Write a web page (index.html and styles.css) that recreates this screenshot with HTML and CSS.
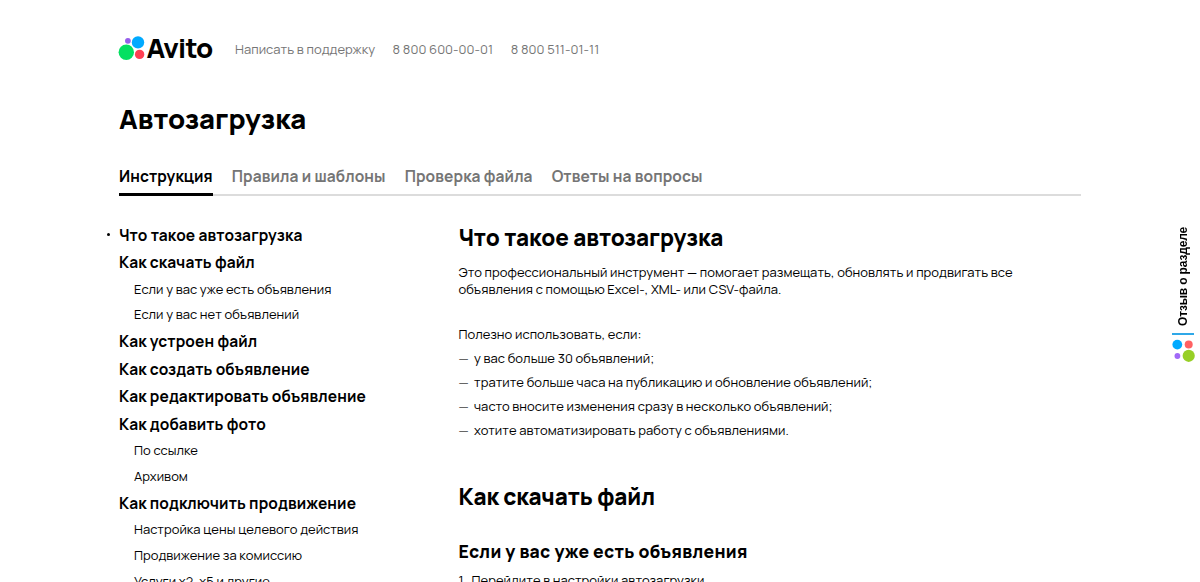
FILE: index.html
```
<!DOCTYPE html>
<html lang="ru">
<head>
    <meta charset="UTF-8">
    <meta name="viewport" content="width=device-width, initial-scale=1.0">
    <title>Автозагрузка</title>
    <link rel="stylesheet" href="styles.css">
</head>
<body>
    <div class="container">
        <header class="header">
            <a href="#" class="logo">
                <svg class="logo-icon" width="26" height="25" viewBox="0 0 26 25">
                    <circle cx="7.3" cy="16.2" r="7.7" fill="#04e061"/>
                    <circle cx="19" cy="6.4" r="6.2" fill="#00aaff"/>
                    <circle cx="8.9" cy="4.8" r="2.9" fill="#965eeb"/>
                    <circle cx="20.6" cy="18.4" r="4.7" fill="#ff4053"/>
                </svg>
                <span class="logo-text">Avito</span>
            </a>
            <nav class="contacts">
                <a href="#">Написать в поддержку</a>
                <a href="#">8 800 600-00-01</a>
                <a href="#">8 800 511-01-11</a>
            </nav>
        </header>

        <h1>Автозагрузка</h1>

        <nav class="tabs">
            <a href="#" class="active">Инструкция</a>
            <a href="#">Правила и шаблоны</a>
            <a href="#">Проверка файла</a>
            <a href="#">Ответы на вопросы</a>
        </nav>

        <div class="columns">
            <ul class="menu">
                <li class="current"><a href="#">Что такое автозагрузка</a></li>
                <li><a href="#">Как скачать файл</a></li>
                <li class="sub"><a href="#">Если у вас уже есть объявления</a></li>
                <li class="sub"><a href="#">Если у вас нет объявлений</a></li>
                <li><a href="#">Как устроен файл</a></li>
                <li><a href="#">Как создать объявление</a></li>
                <li><a href="#">Как редактировать объявление</a></li>
                <li><a href="#">Как добавить фото</a></li>
                <li class="sub"><a href="#">По ссылке</a></li>
                <li class="sub"><a href="#">Архивом</a></li>
                <li><a href="#">Как подключить продвижение</a></li>
                <li class="sub"><a href="#">Настройка цены целевого действия</a></li>
                <li class="sub"><a href="#">Продвижение за комиссию</a></li>
                <li class="sub"><a href="#">Услуги x2, x5 и другие</a></li>
            </ul>

            <main class="content">
                <h2>Что такое автозагрузка</h2>
                <p>Это профессиональный инструмент — помогает размещать, обновлять и продвигать все<br>объявления с помощью Excel-, XML- или CSV-файла.</p>
                <p class="list-title">Полезно использовать, если:</p>
                <ul class="dash-list">
                    <li>у вас больше 30 объявлений;</li>
                    <li>тратите больше часа на публикацию и обновление объявлений;</li>
                    <li>часто вносите изменения сразу в несколько объявлений;</li>
                    <li>хотите автоматизировать работу с объявлениями.</li>
                </ul>
                <h2 class="next">Как скачать файл</h2>
                <h3>Если у вас уже есть объявления</h3>
                <div class="step"><span>1.</span> <span>Перейдите в настройки автозагрузки.</span></div>
            </main>
        </div>
    </div>

    <a href="#" class="feedback">
        <span class="feedback-text">Отзыв о разделе</span>
        <svg class="feedback-icon" width="22" height="24" viewBox="1 0 22 24">
            <circle cx="6.3" cy="6.6" r="4.9" fill="#00aaff"/>
            <circle cx="17.7" cy="6.6" r="4" fill="#ff6163"/>
            <circle cx="6.4" cy="18" r="2.9" fill="#a169f7"/>
            <circle cx="17.7" cy="17.8" r="6.1" fill="#97cf26"/>
        </svg>
    </a>
</body>
</html>
```

FILE: styles.css
```
body {
    font-family: Manrope, Inter, "Open Sans", sans-serif;
    margin: 0;
    height: 582px;
    overflow: hidden;
    background: #fff;
    color: #000;
    font-size: 13px;
    line-height: 17px;
    letter-spacing: 0.05px;
}
a {
    color: inherit;
    text-decoration: none;
}
ul {
    list-style: none;
    margin: 0;
    padding: 0;
}
.container {
    width: 962px;
    margin: 0 auto;
    padding-top: 32px;
}
.header {
    display: flex;
    align-items: center;
    height: 32px;
}
.logo {
    display: flex;
    align-items: center;
    width: 116px;
}
.logo-icon {
    overflow: visible;
}
.logo-text {
    font-size: 27.5px;
    line-height: 32px;
    font-weight: 800;
    letter-spacing: -0.85px;
    margin: -1px 0 0 1.5px;
}
.contacts {
    display: flex;
    gap: 17.5px;
    padding-top: 3px;
    color: #757575;
}
h1 {
    font-size: 27.5px;
    line-height: 36px;
    font-weight: 800;
    letter-spacing: 0;
    margin: 37px 0 0;
}
.tabs {
    display: flex;
    gap: 19px;
    margin-top: 27px;
    font-size: 15.5px;
    line-height: 24px;
    font-weight: 700;
    letter-spacing: 0.1px;
    color: #757575;
    box-shadow: inset 0 -2px #dcdcdc;
}
.tabs a {
    padding-bottom: 8px;
}
.tabs .active {
    color: #000;
    box-shadow: inset 0 -3px #000;
}
.columns {
    display: flex;
    margin-top: 25px;
}
.menu {
    width: 339.5px;
    padding-top: 0.6px;
    font-size: 15.5px;
    font-weight: 700;
    letter-spacing: 0.11px;
}
.menu li {
    line-height: 27.5px;
}
.menu .sub {
    padding-left: 15px;
    font-size: 13px;
    line-height: 25.8px;
    font-weight: 400;
    letter-spacing: 0.05px;
}
.menu .current::before {
    content: "";
    float: left;
    width: 3px;
    height: 3px;
    margin: 11px 0 0 -12px;
    border-radius: 50%;
    background: #000;
}
.content {
    flex: 1;
    padding-top: 1px;
}
h2 {
    font-size: 22.5px;
    line-height: 32px;
    font-weight: 800;
    letter-spacing: -0.08px;
    margin: 0;
}
h3 {
    font-size: 17.5px;
    line-height: 24px;
    font-weight: 800;
    letter-spacing: 0.29px;
    margin: 26px 0 0;
}
p {
    margin: 10px 0 0;
}
.list-title {
    margin-top: 28px;
}
.dash-list {
    margin-top: 3px;
    line-height: 24.1px;
}
.dash-list li {
    display: flex;
}
.dash-list li::before {
    content: "—";
    width: 15.5px;
    color: #666;
}
.next {
    margin-top: 39px;
}
.step {
    display: flex;
    gap: 5px;
    margin-top: 9px;
}
.feedback {
    position: fixed;
    top: 226px;
    right: 5px;
    width: 24px;
}
.feedback-text {
    display: block;
    width: 24px;
    height: 100px;
    writing-mode: vertical-rl;
    transform: rotate(180deg);
    font: bold 12px/24px "Liberation Sans", Arial, sans-serif;
    letter-spacing: -0.15px;
}
.feedback-icon {
    display: block;
    margin: 7px 0 0 1px;
    padding-top: 3px;
    border-top: 2px solid #2fa8e8;
    overflow: visible;
}
```
